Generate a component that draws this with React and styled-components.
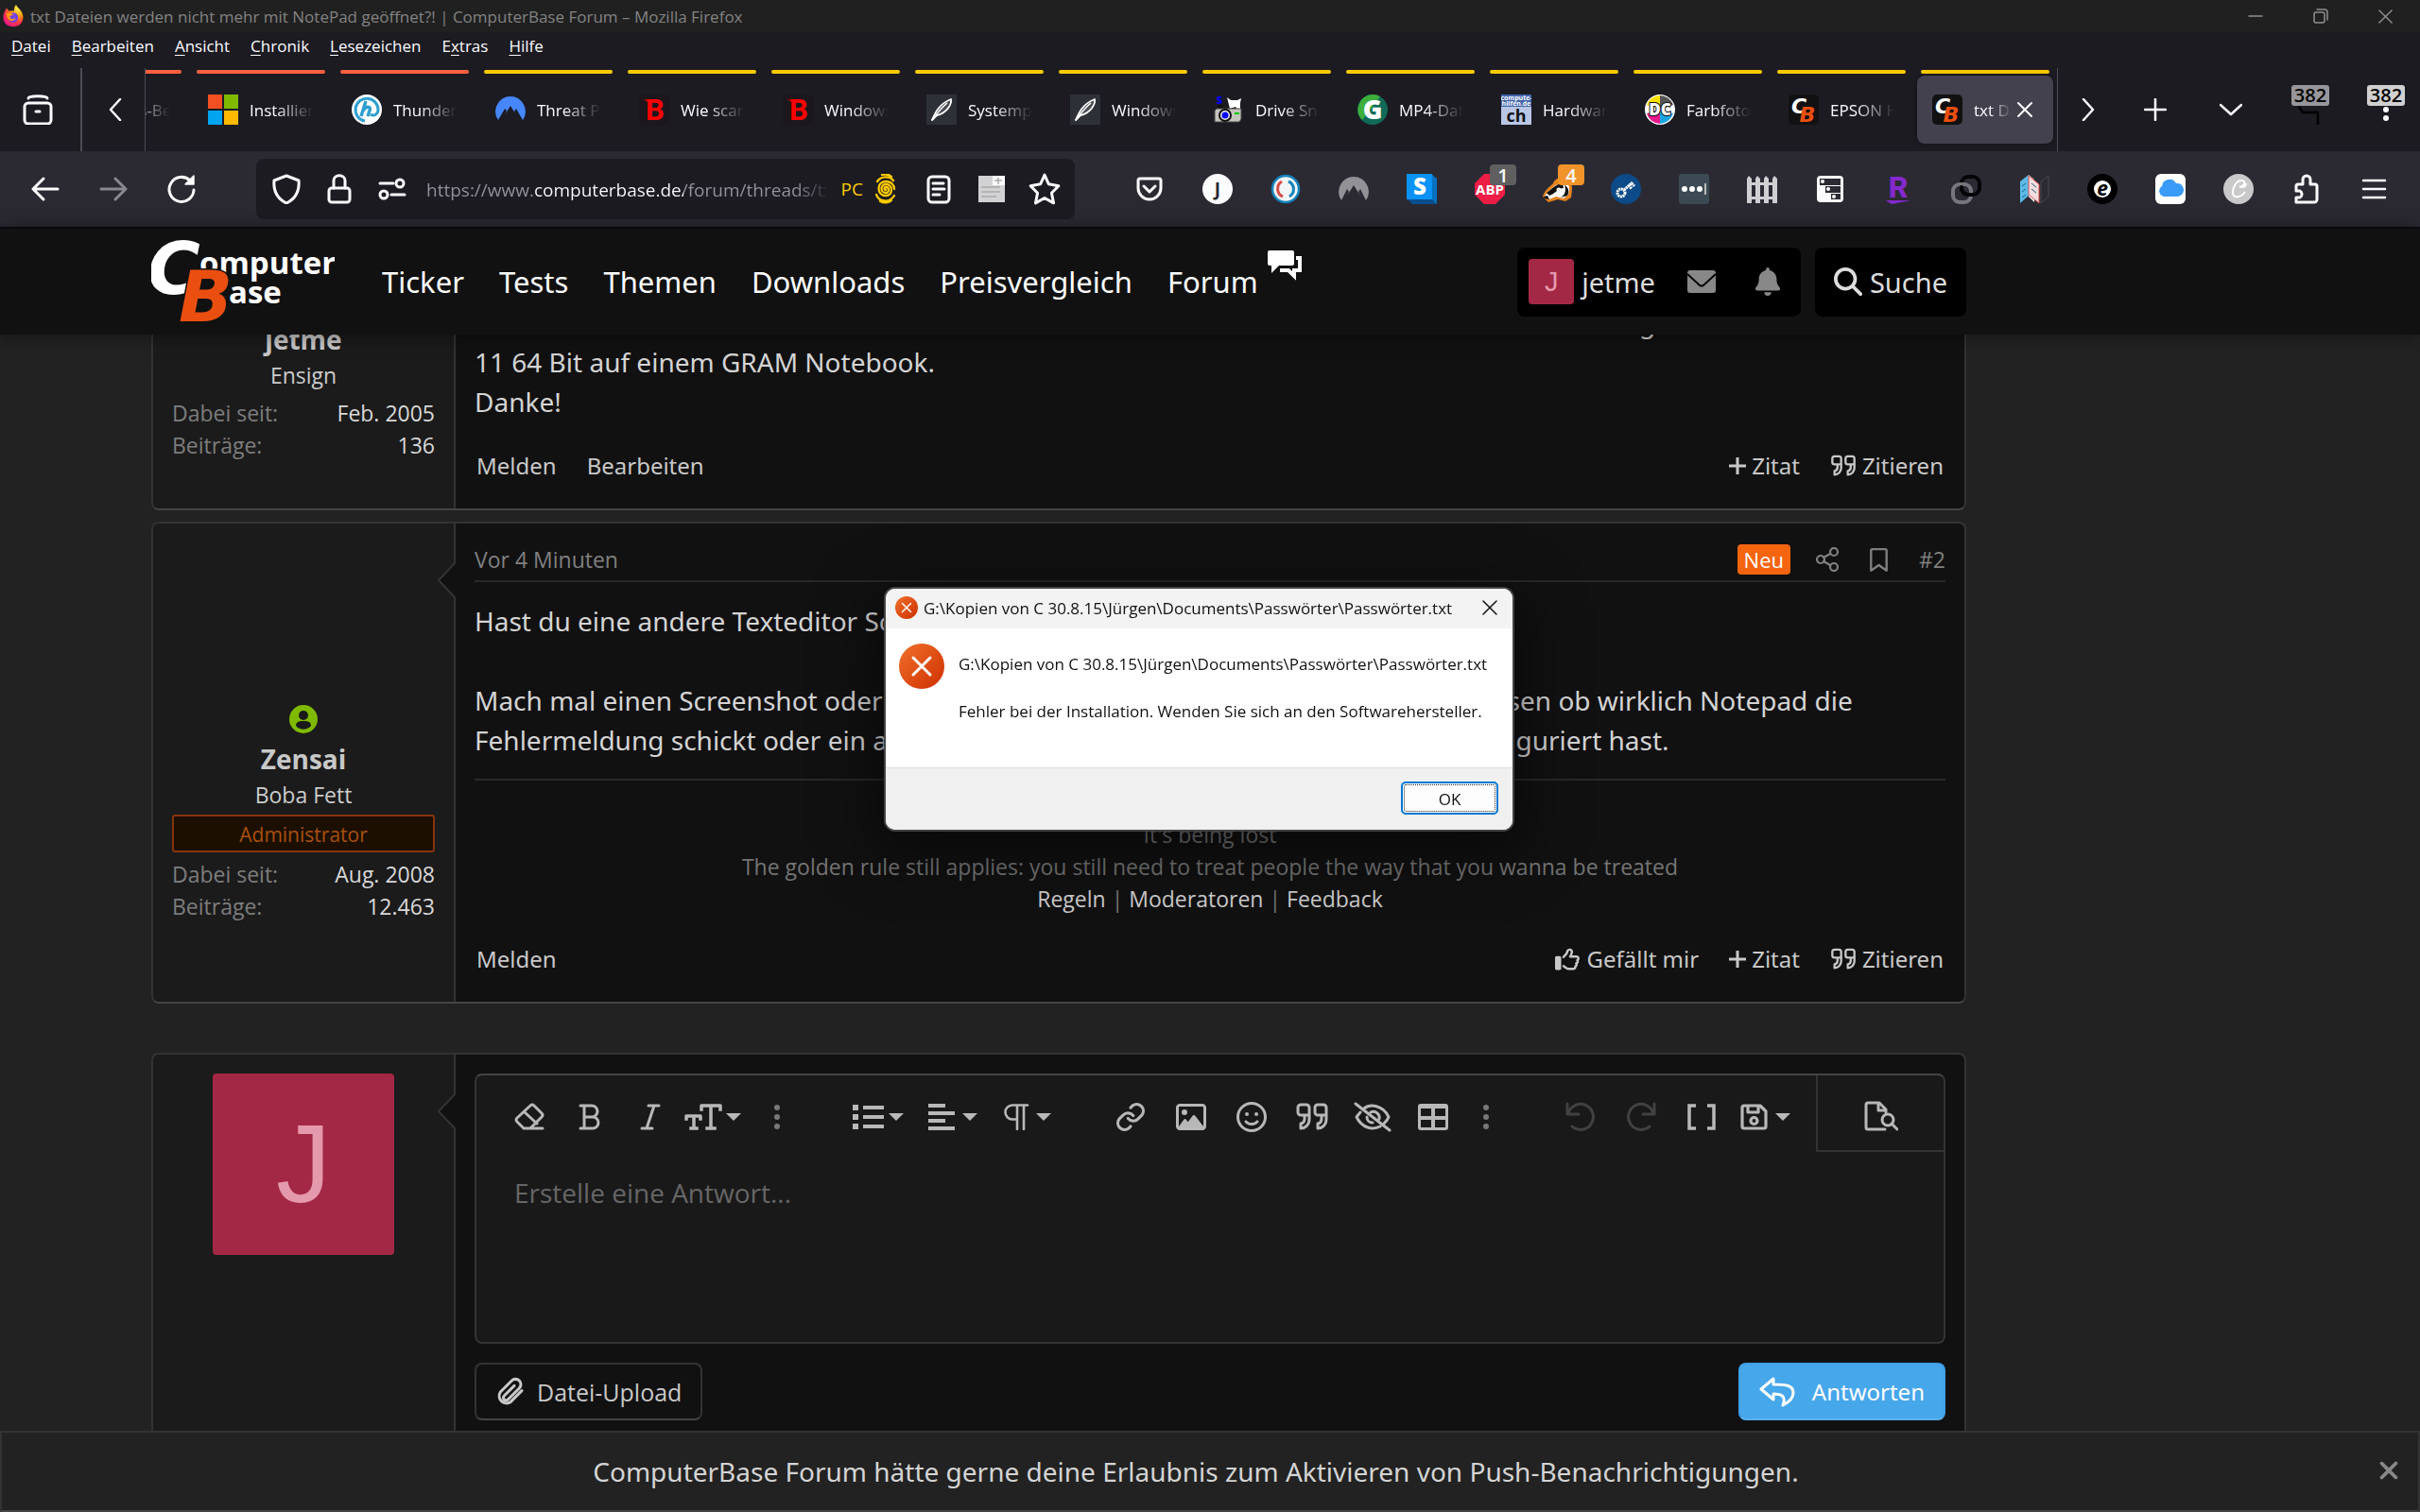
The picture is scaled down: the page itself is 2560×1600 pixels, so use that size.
import React from "react";
import styled, { createGlobalStyle, css } from "styled-components";
import {
  FaMagnifyingGlass, FaBell, FaRegImage, FaRegFaceSmile,
  FaRegThumbsUp, FaRegBookmark, FaXmark,
} from "react-icons/fa6";

const ui = '"Open Sans", "Noto Sans", sans-serif';
const reading = '"Noto Sans", "Open Sans", sans-serif';

const Global = createGlobalStyle`
  *, *::before, *::after { box-sizing: border-box; }
  html, body { margin: 0; height: 100%; background: #222; overflow: hidden; }
  body { font-family: ${ui}; color: #ccc; }
  button, input, textarea { font: inherit; color: inherit; background: none; border: 0; margin: 0; padding: 0; outline: 0; }
  a { color: inherit; text-decoration: none; }
  svg { display: block; flex: none; }
`;

const Screen = styled.div`
  display: flex;
  flex-direction: column;
  height: 100vh;
  overflow: hidden;
`;

/* ---------- browser window ---------- */

const TitleBar = styled.div`
  display: flex;
  align-items: center;
  height: 34px;
  padding-left: 2px;
  gap: 6px;
  background: #202020;
  color: #838383;
  font-size: 17px;
`;
const TitleText = styled.span`flex: 1; white-space: nowrap;`;
const WindowButtons = styled.div`display: flex; padding-right: 2px;`;
const WindowButton = styled.button`
  width: 69px;
  height: 34px;
  display: flex;
  align-items: center;
  justify-content: center;
  color: #8f8f8f;
`;

const MenuBar = styled.nav`
  display: flex;
  gap: 22px;
  height: 38px;
  padding-left: 12px;
  background: #1c1b22;
  color: #fbfbfe;
  font-size: 17px;
`;
const MenuItem = styled.button`line-height: 30px; height: 30px;`;
const Mnemonic = styled.span`text-decoration: underline; text-underline-offset: 3px;`;

const TabStrip = styled.div`
  display: flex;
  height: 88px;
  background: #1c1b22;
  color: #fbfbfe;
`;
const StripButton = styled.button`
  position: relative;
  width: ${(p) => p.$w}px;
  display: flex;
  align-items: center;
  justify-content: center;
`;
const LibraryCell = styled.div`
  display: flex;
  width: 87px;
  margin-right: 3px;
  border-right: 2px solid #4c4b54;
`;
const TabList = styled.div`
  flex: 1;
  min-width: 0;
  display: flex;
  justify-content: flex-end;
  overflow: hidden;
  border: solid #4c4b54;
  border-width: 0 1px;
`;
const TabCell = styled.div`
  flex: none;
  width: 152px;
  padding: 2px 4px 8px;
`;
const GroupLine = styled.div`
  height: 4px;
  margin: 0 4px 2px;
  border-radius: 2px;
  background: ${(p) => p.$color};
`;
const TabBody = styled.div`
  display: flex;
  align-items: center;
  height: 72px;
  padding: 0 16px;
  border-radius: 8px;
  ${(p) => p.$active && css`background: #42414d; box-shadow: 0 0 4px rgba(0, 0, 0, 0.4);`}
`;
const TabTitle = styled.button`
  flex: 1;
  min-width: 0;
  display: flex;
  align-items: center;
  gap: 12px;
  font-size: 17px;
  white-space: nowrap;
`;
const TabLabel = styled.span`
  flex: 1;
  min-width: 0;
  overflow: hidden;
  text-align: left;
  mask-image: linear-gradient(to right, #000 40%, transparent);
`;
const TabClose = styled.button`width: 28px; display: flex; justify-content: center;`;
const TabTools = styled.div`display: flex;`;
const CountBadge = styled.span`
  position: absolute;
  left: 24px;
  top: 18px;
  width: 40px;
  height: 22px;
  border-radius: 3px;
  background: ${(p) => p.$bg};
  color: #000;
  font-size: 20px;
  font-weight: 600;
  line-height: 22px;
  text-align: center;
`;

const NavBar = styled.div`
  display: flex;
  align-items: center;
  height: 82px;
  padding: 0 12px;
  border-bottom: 2px solid #0d0c12;
  background: #2b2a33;
  color: #fbfbfe;
`;
const IconRow = styled.div`display: flex;`;
const NavButton = styled.button`
  position: relative;
  width: 72px;
  height: 64px;
  display: flex;
  align-items: center;
  justify-content: center;
  opacity: ${(p) => (p.$dim ? 0.45 : 1)};
`;
const ExtBadge = styled.span`
  position: absolute;
  right: 8px;
  top: 6px;
  width: 28px;
  height: 22px;
  border-radius: 4px;
  background: ${(p) => p.$bg};
  font-size: 20px;
  font-weight: 600;
  line-height: 24px;
  text-align: center;
`;
const UrlBox = styled.div`
  flex: 1;
  min-width: 0;
  display: flex;
  align-items: center;
  height: 64px;
  margin: 0 43px;
  padding: 0 4px;
  border-radius: 8px;
  background: #1c1b22;
`;
const UrlButton = styled.button`
  width: 56px;
  height: 56px;
  display: flex;
  align-items: center;
  justify-content: center;
`;
const UrlInput = styled.input`
  flex: 1;
  min-width: 0;
  height: 50px;
  margin: 2px 16px 0 8px;
  font-size: 19px;
  background: linear-gradient(to right, #94939c 0 114px, #fbfbfe 114px 272px, #94939c 272px 390px, transparent 428px);
  background-clip: text;
  -webkit-text-fill-color: transparent;
`;
const ContainerButton = styled.button`
  display: flex;
  align-items: center;
  gap: 12px;
  padding-right: 16px;
  color: #ffcb00;
  font-size: 19px;
`;

/* ---------- forum page ---------- */

const SiteHeader = styled.header`
  position: relative;
  z-index: 1;
  display: flex;
  align-items: center;
  height: 112px;
  padding: 0 480px 0 160px;
  background: #111;
  box-shadow: 0 0 20px rgba(0, 0, 0, 0.5);
  color: #fff;
  font-family: ${reading};
  font-size: 31px;
`;
const SiteNav = styled.nav`
  flex: 1;
  display: flex;
  gap: 37px;
  margin-left: 50px;
`;
const NavLink = styled.a`display: flex; gap: 10px;`;
const ForumIcon = styled.svg`margin-top: 2px;`;
const HeaderBox = styled.div`
  display: flex;
  align-items: center;
  height: 73px;
  margin-left: 15px;
  border-radius: 8px;
  background: #000;
  color: #ddd;
  font-size: 29px;
`;
const AccountLink = styled.a`
  display: flex;
  align-items: center;
  gap: 8px;
  padding: 0 14px 0 12px;
`;
const BoxButton = styled.button`
  width: 70px;
  display: flex;
  justify-content: center;
  color: #888;
`;
const SearchButton = styled.button`
  display: flex;
  align-items: center;
  gap: 8px;
  padding: 0 20px;
`;
const Avatar = styled.span`
  width: ${(p) => p.$size}px;
  height: ${(p) => p.$size}px;
  display: flex;
  align-items: center;
  justify-content: center;
  border-radius: 4px;
  background: #a32845;
  color: #e599ad;
  font-family: "Liberation Sans", sans-serif;
  font-size: ${(p) => p.$font}px;
  line-height: 1;
`;

const Page = styled.main`
  flex: 1;
  min-height: 0;
  overflow: hidden;
  padding: 0 480px 0 160px;
  background: #222;
`;
/* the thread is scrolled so that the first post runs under the header */
const Thread = styled.div`
  display: flex;
  flex-direction: column;
  gap: 12px;
  margin-top: -246px;
`;
const Post = styled.article`
  display: grid;
  grid-template-columns: 320px 1fr;
  min-height: 432px;
  border: 2px solid #333;
  border-bottom-color: #444;
  border-radius: 8px;
  background: #111;
`;
const ReplyForm = styled(Post).attrs({ as: "form" })`
  margin-top: 40px;
`;
const UserCell = styled.section`
  position: relative;
  display: flex;
  flex-direction: column;
  align-items: center;
  padding: 20px;
  border-right: 2px solid #333;
  border-radius: 6px 0 0 6px;
  background: #1b1b1b;
  font-size: 23px;
  line-height: 34px;
`;
const NotchMark = styled.svg`
  position: absolute;
  right: -2px;
  top: 40px;
`;
const AvatarSlot = styled.div`
  display: flex;
  align-items: flex-end;
  justify-content: center;
  height: 192px;
  margin-bottom: 18px;
`;
const OnlineMark = styled.svg`margin-bottom: -10px;`;
const UserName = styled.a`
  font-size: 28px;
  font-weight: 700;
  line-height: 38px;
  color: #c8c8c8;
`;
const UserRank = styled.span`margin-top: 2px;`;
const StaffBadge = styled.div`
  align-self: stretch;
  height: 40px;
  margin-top: 4px;
  border: 2px solid #86340b;
  border-radius: 3px;
  background: #1c0f00;
  color: #a8500f;
  font-size: 21px;
  line-height: 38px;
  text-align: center;
`;
const Facts = styled.dl`
  align-self: stretch;
  margin: 6px 0 0;
`;
const Fact = styled.div`
  display: flex;
  justify-content: space-between;
`;
const FactName = styled.dt`color: #7d7d7d;`;
const FactValue = styled.dd`margin: 0; color: #d8d8d8;`;

const PostBody = styled.div`
  min-width: 0;
  display: flex;
  flex-direction: column;
  padding: 20px 20px 28px;
`;
const PostHead = styled.header`
  display: flex;
  align-items: center;
  height: 42px;
  padding-bottom: 4px;
  border-bottom: 2px solid #282828;
  color: #808080;
  font-size: 23px;
`;
const PostTime = styled.a`flex: 1;`;
const NewFlag = styled.span`
  padding: 0 7px;
  border-radius: 4px;
  background: #f5640f;
  color: #fff;
  font-size: 22px;
  line-height: 32px;
`;
const HeadLink = styled.a`margin-left: ${(p) => p.$gap || 30}px;`;
const PostText = styled.div`
  margin-top: ${(p) => (p.$bottom ? "auto" : "20px")};
  color: #d4d4d4;
  font-family: ${reading};
  font-size: 28px;
  line-height: 42px;
  p { margin: 0 0 42px; }
  p:last-child { margin: 0; }
`;
const CutLine = styled.div`padding-left: 1232px;`;
const Signature = styled.footer`
  margin-top: 20px;
  padding-top: 40px;
  border-top: 2px solid #282828;
  color: #757575;
  font-size: 23px;
  line-height: 34px;
  text-align: center;
  a { color: #ccc; }
`;
const Actions = styled.div`
  display: flex;
  align-items: center;
  gap: 32px;
  margin-top: ${(p) => p.$gap || 28}px;
  padding: 0 2px;
  color: #c8c8c8;
  font-family: ${reading};
  font-size: 24px;
  line-height: 34px;
`;
const Action = styled.a`
  display: flex;
  align-items: center;
  gap: ${(p) => p.$gap || 6}px;
`;
const Push = styled.span`flex: 1;`;

/* ---------- reply editor ---------- */

const Editor = styled.div`
  border: 2px solid #333;
  border-top-color: #444;
  border-radius: 8px;
  background: #191919;
`;
const Toolbar = styled.div`
  display: flex;
  height: 81px;
  padding-left: 24px;
  color: #b8b8b8;
`;
const ToolGroup = styled.div`
  display: flex;
  padding: 6px ${(p) => p.$after}px 0 0;
`;
const Tool = styled.button`
  width: ${(p) => p.$w || 64}px;
  display: flex;
  align-items: center;
  justify-content: center;
  opacity: ${(p) => p.$opacity || 1};
`;
const DropTool = styled(Tool)`
  width: 80px;
  justify-content: flex-start;
  gap: 4px;
  padding-left: 4px;
`;
const PreviewTool = styled(Tool)`
  width: 135px;
  margin-left: auto;
  padding-top: 6px;
  border: solid #333;
  border-width: 0 0 2px 2px;
`;
const ReplyText = styled.textarea`
  display: block;
  width: 100%;
  height: 201px;
  padding: 22px 40px;
  resize: none;
  font-size: 28px;
  line-height: 42px;
  &::placeholder { color: #666; opacity: 1; }
`;
const FormRow = styled.div`
  display: flex;
  justify-content: space-between;
  margin-top: 20px;
`;
const FormButton = styled.button`
  display: flex;
  align-items: center;
  gap: ${(p) => (p.$primary ? 18 : 12)}px;
  height: 61px;
  padding: 0 20px;
  border: 2px solid ${(p) => (p.$primary ? "#3fa0e8" : "#333")};
  border-bottom-color: ${(p) => (p.$primary ? "#5ab0ef" : "#444")};
  border-radius: 8px;
  background: ${(p) => (p.$primary ? "#47a7eb" : "transparent")};
  color: ${(p) => (p.$primary ? "#fff" : "#c8c8c8")};
  font-family: ${(p) => (p.$primary ? reading : ui)};
  font-size: ${(p) => (p.$primary ? 24 : 25)}px;
`;

const PushNotice = styled.aside`
  position: relative;
  z-index: 1;
  display: flex;
  align-items: center;
  height: 86px;
  padding: 0 16px;
  border: 2px solid #333;
  border-bottom-color: #444;
  background: #222;
  font-family: ${reading};
  font-size: 28px;
`;
const NoticeText = styled.a`flex: 1; text-align: center; color: #d4d4d4;`;
const NoticeClose = styled.button`color: #888; height: 36px; align-self: flex-start; margin-top: 22px;`;

/* ---------- system message window ---------- */

const Dialog = styled.div`
  position: fixed;
  z-index: 3;
  left: 935px;
  top: 621px;
  width: 667px;
  border: 2px solid #444;
  border-radius: 12px;
  overflow: hidden;
  background: #fff;
  box-shadow: 0 16px 64px 8px rgba(0, 0, 0, 0.5);
  color: #111;
  font-size: 17px;
`;
const DialogBar = styled.div`
  display: flex;
  align-items: center;
  height: 42px;
  gap: 6px;
  padding: 0 15px 2px 10px;
  background: #f3f3f3;
`;
const DialogTitle = styled.span`flex: 1; white-space: nowrap;`;
const DialogBody = styled.div`
  display: flex;
  gap: 15px;
  height: 148px;
  padding: 16px 14px;
  border-bottom: 1px solid #dfdfdf;
  line-height: 25px;
  white-space: nowrap;
  p { margin: 9px 0 25px; }
`;
const DialogFoot = styled.div`
  display: flex;
  justify-content: flex-end;
  padding: 14px 15px 16px;
  background: #f0f0f0;
`;
const OkButton = styled.button`
  width: 103px;
  height: 35px;
  padding-top: 2px;
  border: 2px solid #0078d4;
  border-radius: 5px;
  background: #fdfdfd;
  outline: 1px dotted #222;
  outline-offset: -4px;
`;

/* ---------- drawings ---------- */

const Stroke = ({ w = 32, h = 32, box = "0 0 32 32", sw = 2.4, children, ...rest }) => (
  <svg width={w} height={h} viewBox={box} fill="none" stroke="currentColor" strokeWidth={sw} strokeLinecap="round" strokeLinejoin="round" aria-hidden="true" {...rest}>
    {children}
  </svg>
);
const Fill = ({ w = 32, h = 32, box = "0 0 32 32", children, ...rest }) => (
  <svg width={w} height={h} viewBox={box} fill="currentColor" aria-hidden="true" {...rest}>{children}</svg>
);
const Letter = ({ x = 16, y, size, fill, family = "Open Sans", weight = 700, style, children, anchor = "middle" }) => (
  <text x={x} y={y} fontSize={size} fill={fill} stroke="none" fontFamily={family} fontWeight={weight} fontStyle={style} textAnchor={anchor}>{children}</text>
);

const Cross = ({ s = 18, sw = 2 }) => <Stroke w={s} h={s} box="0 0 18 18" sw={sw}><path d="M2 2l14 14M16 2L2 16" /></Stroke>;

const Firefox = () => (
  <Fill w={24} h={24}>
    <defs>
      <radialGradient id="fx" cx="0.75" cy="0.15" r="0.95">
        <stop offset="0" stopColor="#fff44f" /><stop offset="0.4" stopColor="#ff980e" /><stop offset="0.7" stopColor="#ff3647" /><stop offset="1" stopColor="#e31587" />
      </radialGradient>
    </defs>
    <path fill="url(#fx)" d="M3 12C4 9 6 7 6 5c2 1 3 2 4 4 3-1 5-1 7 0 0-4 1-7 3-9 1 4 9 7 10 17 0 9-6 14-14 14S2 26 2 18c0-2 0-4 1-6z" />
    <circle cx="16" cy="18" r="7" fill="#7543e3" />
    <path fill="#ff980e" d="M6 12c4-2 8 0 11 2-3 0-4 2-6 3 1 4 6 4 9 1-2 7-13 7-14-6z" />
  </Fill>
);
const BIcon = () => (
  <Fill><rect width="32" height="32" fill="#1b171c" /><path d="M5 5h7v3H9z" fill="#b00" /><Letter x={17} y={27} size={31} fill="#f00" family="Roboto" weight={700}>B</Letter></Fill>
);
const Quill = () => (
  <Fill>
    <rect width="32" height="32" fill="#2d3037" />
    <path d="M6 27C9 20 13 10 26 5c1 7-6 15-15 17z" fill="#4a4c52" stroke="#fff" strokeWidth="1.800" strokeLinejoin="round" />
    <path d="M6 27C12 19 17 13 22 9" fill="none" stroke="#fff" strokeWidth="1.500" />
  </Fill>
);
const CbIcon = () => (
  <Fill><rect width="32" height="32" rx="5" fill="#111" /><Letter x={11} y={20} size={22} fill="#fff" family="DejaVu Sans" style="italic">C</Letter><Letter x={20} y={29} size={22} fill="#ea4f10" family="DejaVu Sans" style="italic">B</Letter></Fill>
);
const Favicons = {
  ms: <Fill><path fill="#f25022" d="M0 0h15v15H0z" /><path fill="#7fba00" d="M17 0h15v15H17z" /><path fill="#00a4ef" d="M0 17h15v15H0z" /><path fill="#ffb900" d="M17 17h15v15H17z" /></Fill>,
  th: <Fill><circle cx="16" cy="16" r="16" fill="#fff" /><path d="M14 28A12 12 0 1 1 28 17c-1 5-5 6-8 4" fill="none" stroke="#2f9fd0" strokeWidth="3" /><path d="M15 7l-5 16M12 17c3-5 9-5 7 0l-2 6" fill="none" stroke="#2f9fd0" strokeWidth="3.500" /></Fill>,
  nord: <Fill><path fill="#4687ff" d="M3 27A16 16 0 0 1 16 2a16 16 0 0 1 13 25l-7-12-2 3 1 2-5-8-5 8 1-3-2-2z" /></Fill>,
  b: <BIcon />,
  quill: <Quill />,
  drive: <Fill><Letter x={6} y={10} size={11} fill="#00f" weight={800}>S</Letter><path fill="#fff" d="M14 3l4 3h7l4-2-1 5v7h-3l-2-3-6 2z" /><path fill="#111" d="M5 11h5v4H5z" /><path fill="#c4c4bc" stroke="#444" d="M1 17l2-2h26v11l-2 3H1z" /><circle cx="12" cy="22" r="6" fill="#eee" stroke="#111" strokeWidth="2" /><circle cx="12" cy="22" r="3.500" fill="#00f" /><path fill="#0c0" d="M22 19h5v2h-5z" /></Fill>,
  g: <Fill><circle cx="16" cy="16" r="16" fill="#0f6b58" /><path d="M16 0a16 16 0 0 0-11 27L24 2a16 16 0 0 0-8-2z" fill="#3dae3a" /><Letter y={26} size={28} fill="#fff" weight={800}>G</Letter></Fill>,
  ch: <Fill><rect width="32" height="32" fill="#b9c7e6" /><rect width="32" height="13" fill="#3f66ad" /><Letter y={6} size={7} fill="#fff">compute-</Letter><Letter y={12} size={7} fill="#fff">hilfen.de</Letter><Letter y={29} size={18} fill="#111">ch</Letter></Fill>,
  dc: <Fill><circle cx="16" cy="16" r="16" fill="#fff" /><path fill="#ffe100" d="M16 16V1A15 15 0 0 0 2 11z" /><path fill="#555" d="M16 16V1a15 15 0 0 1 14 10z" /><path fill="#e6168b" d="M16 16v15A15 15 0 0 1 2 20z" /><path fill="#19a5e1" d="M16 16v15a15 15 0 0 0 14-11z" /><text x="16" y="22" fontSize="17" fontFamily="Open Sans" fontWeight="800" textAnchor="middle" fill="#fff" stroke="#111" strokeWidth="2" paintOrder="stroke">DC</text></Fill>,
  cb: <CbIcon />,
};

const QuoteIcon = ({ w = 28, h = 26 }) => (
  <Stroke w={w} h={h} box="0 0 36 32" sw={3}>
    <path d="M15 14H6a3 3 0 0 1-3-3V6a3 3 0 0 1 3-3h6a3 3 0 0 1 3 3v13a9 9 0 0 1-9 9v-5a5 5 0 0 0 4-5v-4" />
    <path d="M33 14h-9a3 3 0 0 1-3-3V6a3 3 0 0 1 3-3h6a3 3 0 0 1 3 3v13a9 9 0 0 1-9 9v-5a5 5 0 0 0 4-5v-4" />
  </Stroke>
);
const PlusIcon = () => <Fill w={18} h={18} box="0 0 18 18"><path d="M7.500 0h3v7.500H18v3h-7.500V18h-3v-7.500H0v-3h7.500z" /></Fill>;
const Dots = () => <Fill w={6} h={28} box="0 0 6 28"><circle cx="3" cy="4" r="3" /><circle cx="3" cy="14" r="3" /><circle cx="3" cy="24" r="3" /></Fill>;
const Caret = () => <Fill w={16} h={8} box="0 0 16 8"><path d="M0 0h16L8 8z" /></Fill>;
const Undo = ({ flip }) => (
  <Stroke sw={3}><g transform={flip ? "translate(32 0) scale(-1 1)" : undefined}><path d="M2 2v11h12M3 12A13.500 13.500 0 1 1 7 26" /></g></Stroke>
);
const ErrorMark = ({ s }) => (
  <Fill w={s} h={s} box="0 0 48 48">
    <defs><linearGradient id="err" x2="1" y2="1"><stop stopColor="#f0702c" /><stop offset="1" stopColor="#cf3000" /></linearGradient></defs>
    <circle cx="24" cy="24" r="24" fill="url(#err)" />
    <path d="M15 15l18 18M33 15L15 33" stroke="#fff" strokeWidth="3" strokeLinecap="round" />
  </Fill>
);
const Notch = () => (
  <NotchMark width="20" height="40" viewBox="0 0 20 40">
    <path d="M20 2L2 20l18 18z" fill="#111" />
    <path d="M19 2L2 20l17 18" fill="none" stroke="#333" strokeWidth="2" />
  </NotchMark>
);
const Logo = () => (
  <svg width="194" height="90" viewBox="0 0 194 90" role="img" aria-label="ComputerBase">
    <Letter x={-4} y={58} size={76} fill="#fff" family="DejaVu Sans" style="italic" anchor="start">C</Letter>
    <Letter x={51} y={37} size={33} fill="#fff" anchor="start">omputer</Letter>
    <Letter x={82} y={68} size={33} fill="#fff" anchor="start">ase</Letter>
    <text x="29" y="87" fontSize="75" fontFamily="DejaVu Sans" fontWeight="700" fontStyle="italic" fill="#ea4f10" stroke="#111" strokeWidth="3" paintOrder="stroke">B</text>
  </svg>
);

const extensions = [
  ["Pocket", <Stroke sw={3}><path d="M6 5h20a2 2 0 0 1 2 2v8a12 12 0 0 1-24 0V7a2 2 0 0 1 2-2z" /><path d="M10 13l6 6 6-6" /></Stroke>],
  ["Konto J", <Fill><circle cx="16" cy="16" r="16" fill="#fbfbfe" /><Letter y={23} size={19} fill="#2b2a33" family="Noto Sans">J</Letter></Fill>],
  ["Synchronisieren", <Fill><circle cx="16" cy="16" r="14" fill="#f2f6f9" stroke="#1583bb" strokeWidth="2.500" /><path d="M13 24a9 9 0 0 1-1-16" fill="none" stroke="#d64c45" strokeWidth="3" /><path d="M19 8a9 9 0 0 1 1 16" fill="none" stroke="#1583bb" strokeWidth="3" /></Fill>],
  ["NordVPN", <Fill><path fill="#929196" d="M3 28A16 16 0 0 1 16 3a16 16 0 0 1 13 25l-6-12-2 3 2 4-7-11-7 11 2-4-2-3z" /></Fill>],
  ["Startpage", <Fill><path fill="#0b4f8f" d="M0 26h27l5 6H6z" /><path fill="#0870c0" d="M26 0l6 5v27l-6-6z" /><path fill="#0a92f5" d="M0 0h27v27H0z" /><Letter x={14} y={22} size={24} fill="#fff" weight={800}>S</Letter></Fill>],
  ["Adblock Plus", <Fill><path fill="#ed1e45" d="M10 0h12l10 10v12L22 32H10L0 22V10z" /><Letter y={22} size={15} fill="#fff">ABP</Letter></Fill>, "1", "#5f5f5f"],
  ["Privacy Badger", <Fill><path fill="#e5821e" d="M0 24C2 17 7 14 11 10c1-4 5-6 8-5l10 2c3 6 2 12 1 18l-6 4-8-2-10 3z" /><path fill="#fff" d="M2 24c3-6 8-8 11-12l13-3c3 5 2 9 1 13l-5 4-8-2-7 3z" /><path fill="#111" d="M4 20c5-3 9-9 17-10l1 5c-5 0-9 6-15 8zM23 12c5 2 5 8 3 11l-7 2c5-3 6-8 4-13zM1 24l4-1 2 4-5-1z" /><circle cx="17" cy="17" r="2.500" fill="#fff" /></Fill>, "4", "#f0932b"],
  ["Schlüssel", <Fill><circle cx="16" cy="16" r="16" fill="#0c4b88" /><g fill="none" stroke="#fff" strokeWidth="3" strokeDasharray="2 0.600"><circle cx="11" cy="20" r="4" /><path d="M14 17l9-8M19 12l3 4M22 10l3 3" /></g></Fill>],
  ["Passwort", <Fill><rect width="32" height="32" rx="3" fill="#3c4a54" /><g fill="#fff"><circle cx="6" cy="16" r="3" /><circle cx="14" cy="16" r="3" /><circle cx="22" cy="16" r="3" /><path d="M27 10h2v12h-2z" fill="#bbb" /></g></Fill>],
  ["Zaun", <Fill><g fill="#cfcfd2"><path d="M0 5l2-3 3 3v26H0zM9 5l2-3 3 3v26H9zM18 5l2-3 3 3v26h-5zM27 5l2-3 3 3v26h-5zM0 9h32v3H0zM0 24h32v3H0z" /></g></Fill>],
  ["Schubladen", <Fill><rect x="2" y="2" width="28" height="28" rx="4" fill="#fbfbfe" /><path fill="#2b2a33" d="M5 5h22v7H5zM11 13h16v7H11zM17 21h10v6H17z" /><g fill="#fff"><circle cx="8" cy="8" r="2" /><circle cx="14" cy="16" r="2" /><circle cx="20" cy="24" r="2" /></g></Fill>],
  ["Rakuten", <Fill><Letter y={25} size={32} fill="#8529cd" family="Roboto" weight={800}>R</Letter><path fill="#8529cd" d="M3 28h26l-20 4z" /></Fill>],
  ["Verknüpfung", <Stroke sw={4}><rect x="11" y="3" width="19" height="19" rx="7" stroke="#050507" /><rect x="2" y="11" width="19" height="19" rx="7" stroke="#77767c" /><path stroke="#050507" d="M11 14c0 5 3 8 7 8h5" /></Stroke>],
  ["Karte", <Fill><path fill="#5cbbe8" d="M1 8L10 1v22L1 31z" /><path fill="#f7f7f7" d="M10 1l6 5v24l-6-6z" /><path fill="#f2dede" stroke="#e04a48" d="M10 2l11 9v20l-11-9z" /><path fill="none" stroke="#48474f" d="M23 8l8-6v22l-8 7z" /><path d="M3 13l4-3M3 19l4-3M3 25l4-3M13 10l5 4M13 16l5 4" stroke="#1a5f86" /></Fill>],
  ["Evernote", <Fill><circle cx="16" cy="16" r="16" fill="#000" /><circle cx="16" cy="16" r="9" fill="#fff" /><Letter y={23} size={21} fill="#000" style="italic">e</Letter></Fill>],
  ["iCloud", <Fill><rect width="32" height="32" rx="6" fill="#fff" /><path fill="#3b9cf8" d="M9 24a6 6 0 0 1-2-11 8 8 0 0 1 15-3 7 7 0 0 1 2 14z" /></Fill>],
  ["Lesezeichen C", <Fill><circle cx="16" cy="16" r="16" fill="#c9c9c9" /><path d="M19 13c4-1 5-6 0-6-7 0-13 16-6 17 4 1 8-2 10-5M17 13c2 2 7 1 7-3" fill="none" stroke="#fff" strokeWidth="2" /></Fill>],
  ["Erweiterungen", <Stroke sw={3}><path d="M5 30h19a3 3 0 0 0 3-3V13a2 2 0 0 0-2-2h-5V6a4 4 0 0 0-8 0v5H7a2 2 0 0 0-2 2v5h4a4 4 0 0 1 0 7H5z" /></Stroke>],
  ["Menü", <Stroke sw={2.5}><path d="M4 7h23M4 16h23M4 25h23" /></Stroke>],
];

const red = "#ff613d";
const yellow = "#ffcb00";
const tabs = [
  ["quill", "Fotos-Bee", red],
  ["ms", "Installieren", red],
  ["th", "Thunderbird", red],
  ["nord", "Threat Protection", yellow],
  ["b", "Wie scanne", yellow],
  ["b", "Windows", yellow],
  ["quill", "Systempartition", yellow],
  ["quill", "Windows", yellow],
  ["drive", "Drive Snapshot", yellow],
  ["g", "MP4-Datei", yellow],
  ["ch", "Hardware", yellow],
  ["dc", "Farbfoto", yellow],
  ["cb", "EPSON Handbuch", yellow],
  ["cb", "txt Dateien", yellow, true],
];
const menus = [["", "D", "atei"], ["", "B", "earbeiten"], ["", "A", "nsicht"], ["", "C", "hronik"], ["", "L", "esezeichen"], ["E", "x", "tras"], ["", "H", "ilfe"]];

const Browser = () => (
  <>
    <TitleBar>
      <Firefox />
      <TitleText>txt Dateien werden nicht mehr mit NotePad geöffnet?! | ComputerBase Forum – Mozilla Firefox</TitleText>
      <WindowButtons>
        <WindowButton aria-label="Minimieren"><Stroke w={16} h={16} box="0 0 16 16" sw={1.5}><path d="M1 8h14" /></Stroke></WindowButton>
        <WindowButton aria-label="Verkleinern"><Stroke w={16} h={16} box="0 0 16 16" sw={1.5}><rect x="1" y="4" width="11" height="11" rx="2" /><path d="M4 1h8a3 3 0 0 1 3 3v8" /></Stroke></WindowButton>
        <WindowButton aria-label="Schließen"><Cross s={17} sw={1.5} /></WindowButton>
      </WindowButtons>
    </TitleBar>
    <MenuBar>
      {menus.map(([a, b, c]) => <MenuItem key={c}>{a}<Mnemonic>{b}</Mnemonic>{c}</MenuItem>)}
    </MenuBar>
    <TabStrip>
      <LibraryCell>
        <StripButton $w={80} aria-label="Bibliothek">
          <Stroke sw={3}><path d="M6 4c0-3 20-3 20 0" /><rect x="2" y="9" width="28" height="22" rx="4" /><path d="M14 18h4" /></Stroke>
        </StripButton>
      </LibraryCell>
      <StripButton $w={63} aria-label="Tabs zurück"><Stroke w={14} h={24} box="0 0 14 24" sw={2.5}><path d="M12 1L2 12l10 11" /></Stroke></StripButton>
      <TabList role="tablist">
        {tabs.map(([icon, label, color, active], i) => (
          <TabCell key={i}>
            <GroupLine $color={color} />
            <TabBody $active={active}>
              <TabTitle role="tab" aria-selected={!!active}>{Favicons[icon]}<TabLabel>{label}</TabLabel></TabTitle>
              {active && <TabClose aria-label="Tab schließen"><Cross s={18} /></TabClose>}
            </TabBody>
          </TabCell>
        ))}
      </TabList>
      <TabTools>
        <StripButton $w={63} aria-label="Tabs vor"><Stroke w={14} h={24} box="0 0 14 24" sw={2.5}><path d="M2 1l10 11L2 23" /></Stroke></StripButton>
        <StripButton $w={80} aria-label="Neuer Tab"><Stroke w={24} h={24} box="0 0 24 24" sw={2.5}><path d="M12 1v22M1 12h22" /></Stroke></StripButton>
        <StripButton $w={80} aria-label="Alle Tabs"><Stroke w={24} h={14} box="0 0 24 14" sw={2.5}><path d="M1 2l11 10L23 2" /></Stroke></StripButton>
        <StripButton $w={80} aria-label="Tabzähler">
          <Stroke sw={2.5} stroke="#000"><path d="M8 13l4 6h16v13" /></Stroke><CountBadge $bg="#97969a">382</CountBadge>
        </StripButton>
        <StripButton $w={80} aria-label="Tabmenü">
          <Fill><circle cx="20" cy="16" r="3" /><circle cx="20" cy="25" r="3" /></Fill><CountBadge $bg="#d0d0d0">382</CountBadge>
        </StripButton>
      </TabTools>
    </TabStrip>
    <NavBar>
      <IconRow>
        <NavButton aria-label="Zurück"><Stroke sw={3}><path d="M29 16H3M14 5L3 16l11 11" /></Stroke></NavButton>
        <NavButton $dim aria-label="Vor"><Stroke sw={3}><path d="M3 16h26M18 5l11 11-11 11" /></Stroke></NavButton>
        <NavButton aria-label="Neu laden"><Stroke sw={3}><path d="M29 17A13 13 0 1 1 25 7" /><path d="M29 2v9h-9z" fill="currentColor" strokeWidth="1.500" /></Stroke></NavButton>
      </IconRow>
      <UrlBox>
        <UrlButton aria-label="Schutz"><Stroke sw={3}><path d="M16 2l13 5c1 11-3 19-13 24C6 26 2 18 3 7z" /></Stroke></UrlButton>
        <UrlButton aria-label="Verbindung"><Stroke sw={3}><rect x="5" y="15" width="22" height="15" rx="3" /><path d="M10 15V7c0-7 12-7 12 0v8" /></Stroke></UrlButton>
        <UrlButton aria-label="Berechtigungen"><Stroke sw={3}><path d="M3 10h14M15 22h14" /><circle cx="24" cy="10" r="4" /><circle cx="7" cy="22" r="4" /></Stroke></UrlButton>
        <UrlInput aria-label="Adresse" defaultValue="https://www.computerbase.de/forum/threads/txt" />
        <ContainerButton>
          PC
          <Stroke w={24} h={32} box="0 0 24 32" sw={2.3}>
            <path d="M12 17c-2 0-2-3 0-3 4 0 4 6 0 6-6 0-6-9 0-9 8 0 8 12 0 12-10 0-10-15 0-15 6 0 9 4 9 8" />
            <path d="M3 8c4-6 13-6 17-1M2 22c3 8 14 9 19 1M6 29c4 2 9 2 12-1M8 1c4-1 8 0 10 2" />
          </Stroke>
        </ContainerButton>
        <UrlButton aria-label="Leseansicht"><Stroke sw={3}><rect x="5" y="3" width="22" height="27" rx="4" /><path d="M10 10h11M10 16h12M10 22h7" /></Stroke></UrlButton>
        <UrlButton aria-label="Seite ablegen"><Fill><path fill="#d2d2d4" d="M2 2h28v28H2z" /><path fill="#fff" d="M17 2h13v10H17z" /><path d="M23 4v7M19 7h8M5 14h20M5 19h20M5 24h16" stroke="#aaa" strokeWidth="1.500" /></Fill></UrlButton>
        <UrlButton aria-label="Lesezeichen setzen"><Stroke w={34} h={34} sw={2.8}><path d="M16 2l4 9 10 2-7 7 2 10-9-5-9 5 2-10-7-7 10-2z" /></Stroke></UrlButton>
      </UrlBox>
      <IconRow>
        {extensions.map(([name, icon, badge, bg]) => (
          <NavButton key={name} aria-label={name}>{icon}{badge && <ExtBadge $bg={bg}>{badge}</ExtBadge>}</NavButton>
        ))}
      </IconRow>
    </NavBar>
  </>
);

const Header = () => (
  <SiteHeader>
    <a href="#start"><Logo /></a>
    <SiteNav>
      {["Ticker", "Tests", "Themen", "Downloads", "Preisvergleich"].map((t) => <NavLink key={t} href={"#" + t}>{t}</NavLink>)}
      <NavLink href="#forum">Forum
        <ForumIcon width="36" height="32" viewBox="0 0 36 32" fill="currentColor" transform="translate(0 -14)"><path d="M2 0h24a2 2 0 0 1 2 2v12a2 2 0 0 1-2 2H12l-8 8v-8H2a2 2 0 0 1-2-2V2a2 2 0 0 1 2-2z" /><path d="M30 8h4v13h-6v6l-6-6h-9" fill="none" stroke="currentColor" strokeWidth="4" /></ForumIcon>
      </NavLink>
    </SiteNav>
    <HeaderBox>
      <AccountLink href="#konto"><Avatar $size={48} $font={29}>J</Avatar>jetme</AccountLink>
      <BoxButton aria-label="Nachrichten"><Fill w={30} h={24} box="0 0 30 24"><path d="M3 0h24a3 3 0 0 1 3 3v18a3 3 0 0 1-3 3H3a3 3 0 0 1-3-3V3a3 3 0 0 1 3-3z" /><path d="M0 4l13 12q2 1 4 0L30 4" fill="none" stroke="#000" strokeWidth="2" /></Fill></BoxButton>
      <BoxButton aria-label="Hinweise"><FaBell size={30} /></BoxButton>
    </HeaderBox>
    <HeaderBox><SearchButton><FaMagnifyingGlass size={30} />Suche</SearchButton></HeaderBox>
  </SiteHeader>
);

const UserFacts = ({ since, posts }) => (
  <Facts>
    <Fact><FactName>Dabei seit:</FactName><FactValue>{since}</FactValue></Fact>
    <Fact><FactName>Beiträge:</FactName><FactValue>{posts}</FactValue></Fact>
  </Facts>
);
const QuoteActions = () => (
  <>
    <Action href="#zitat"><PlusIcon />Zitat</Action>
    <Action href="#zitieren"><QuoteIcon />Zitieren</Action>
  </>
);

const FirstPost = () => (
  <Post>
    <UserCell>
      <AvatarSlot><Avatar $size={192} $font={116}>J</Avatar></AvatarSlot>
      <UserName href="#jetme">jetme</UserName>
      <UserRank>Ensign</UserRank>
      <UserFacts since="Feb. 2005" posts="136" />
    </UserCell>
    <PostBody>
      <PostText $bottom>
        <CutLine>g</CutLine>
        11 64 Bit auf einem GRAM Notebook.<br />Danke!
      </PostText>
      <Actions $gap={30}>
        <Action href="#melden">Melden</Action>
        <Action href="#bearbeiten">Bearbeiten</Action>
        <Push />
        <QuoteActions />
      </Actions>
    </PostBody>
  </Post>
);

const SecondPost = () => (
  <Post>
    <UserCell>
      <Notch />
      <AvatarSlot>
        <OnlineMark width="30" height="30" viewBox="0 0 30 30"><circle cx="15" cy="15" r="15" fill="#7fb900" /><circle cx="15" cy="11" r="5" fill="#1a1a1a" /><path d="M7 22c0-4 3-5 8-5s8 1 8 5c-4 5-12 5-16 0z" fill="#1a1a1a" /></OnlineMark>
      </AvatarSlot>
      <UserName href="#zensai">Zensai</UserName>
      <UserRank>Boba Fett</UserRank>
      <StaffBadge>Administrator</StaffBadge>
      <UserFacts since="Aug. 2008" posts="12.463" />
    </UserCell>
    <PostBody>
      <PostHead>
        <PostTime href="#zeit">Vor 4 Minuten</PostTime>
        <NewFlag>Neu</NewFlag>
        <HeadLink href="#teilen" aria-label="Teilen" $gap={27}><Stroke w={24} h={26} box="0 0 24 26" sw={2.2}><circle cx="19" cy="5" r="4" /><circle cx="5" cy="13" r="4" /><circle cx="19" cy="21" r="4" /><path d="M8 11l7-4M8 15l7 4" /></Stroke></HeadLink>
        <HeadLink href="#merken" aria-label="Merken"><FaRegBookmark size={25} /></HeadLink>
        <HeadLink href="#2">#2</HeadLink>
      </PostHead>
      <PostText>
        <p>Hast du eine andere Texteditor Software installiert?</p>
        <p>Mach mal einen Screenshot oder schau dir die Meldung genau an, um auszuschliessen ob wirklich Notepad die<br />Fehlermeldung schickt oder ein anderes Programm, das du dafür als Standard konfiguriert hast.</p>
      </PostText>
      <Signature>
        It's being lost<br />
        The golden rule still applies: you still need to treat people the way that you wanna be treated<br />
        <a href="#regeln">Regeln</a> | <a href="#moderatoren">Moderatoren</a> | <a href="#feedback">Feedback</a>
      </Signature>
      <Actions $gap={30}>
        <Action href="#melden2">Melden</Action>
        <Push />
        <Action href="#like" $gap={8}><FaRegThumbsUp size={26} />Gefällt mir</Action>
        <QuoteActions />
      </Actions>
    </PostBody>
  </Post>
);

const Reply = () => (
  <ReplyForm onSubmit={(e) => e.preventDefault()}>
    <UserCell>
      <Notch />
      <Avatar $size={192} $font={116}>J</Avatar>
    </UserCell>
    <PostBody>
      <Editor>
        <Toolbar>
          <ToolGroup $after={54}>
            <Tool type="button" aria-label="Formatierung entfernen"><Stroke sw={3}><path d="M10 28L3 21q-2-2 0-4L17 4q2-2 4 0l8 8q2 2 0 4L17 28M10 28h20M11 11l13 12" /></Stroke></Tool>
            <Tool type="button" aria-label="Fett"><Stroke w={24} h={28} box="0 0 24 28" sw={3}><path d="M2 2h12a6 6 0 0 1 0 12H6M6 2v24M2 26h13a6 6 0 0 0 0-12" /></Stroke></Tool>
            <Tool type="button" aria-label="Kursiv"><Stroke w={24} h={28} box="0 0 24 28" sw={3}><path d="M10 2h11M3 26h11M16 2L8 26" /></Stroke></Tool>
            <DropTool type="button" aria-label="Schriftgröße"><Stroke w={40} h={28} box="0 0 40 28" sw={3.5} strokeLinecap="square"><path d="M18 6V2h20v4M28 2v24M24 26h8M2 16v-3h15v3M10 13v13M7 26h6" /></Stroke><Caret /></DropTool>
            <Tool type="button" $w={44} $opacity={0.6} aria-label="Mehr Text"><Dots /></Tool>
          </ToolGroup>
          <ToolGroup $after={26}>
            <DropTool type="button" aria-label="Liste"><Fill w={34} h={28} box="0 0 34 28"><path d="M0 1h6v6H0zM0 11h6v6H0zM0 21h6v6H0zM11 2h22v4H11zM11 12h22v4H11zM11 22h22v4H11z" /></Fill><Caret /></DropTool>
            <DropTool type="button" aria-label="Ausrichtung"><Fill w={32} h={28} box="0 0 32 28"><path d="M0 0h18v4H0zM0 8h28v4H0zM0 16h18v4H0zM0 24h28v4H0z" /></Fill><Caret /></DropTool>
            <DropTool type="button" aria-label="Absatzformat"><Stroke w={30} h={28} box="0 0 30 28" sw={2.6}><path d="M25 1.500H9a7 7 0 0 0 0 15h5M14 2v25M21 2v25" /></Stroke><Caret /></DropTool>
          </ToolGroup>
          <ToolGroup $after={44}>
            <Tool type="button" aria-label="Link"><Stroke w={34} h={34} box="0 0 24 24" sw={2.2}><path d="M10 13a5 5 0 0 0 7.500.5l3-3a5 5 0 0 0-7-7L12 5M14 11a5 5 0 0 0-7.500-.5l-3 3a5 5 0 0 0 7 7L12 19" /></Stroke></Tool>
            <Tool type="button" aria-label="Bild"><FaRegImage size={32} /></Tool>
            <Tool type="button" aria-label="Smiley"><FaRegFaceSmile size={32} /></Tool>
            <Tool type="button" aria-label="Zitat"><QuoteIcon w={38} h={32} /></Tool>
            <Tool type="button" aria-label="Spoiler"><Stroke w={40} h={32} box="0 0 40 32" sw={3}><path d="M2 2l36 28M11 7C17 2 31 3 37 16c-1 3-3 5-5 7M7 11l-4 5c6 12 17 14 25 10M18 11c4-2 10 1 9 7M14 16c0 4 3 6 6 6" /></Stroke></Tool>
            <Tool type="button" aria-label="Tabelle"><Fill w={32} h={28} box="0 0 32 28"><path fillRule="evenodd" d="M3 0h26a3 3 0 0 1 3 3v22a3 3 0 0 1-3 3H3a3 3 0 0 1-3-3V3a3 3 0 0 1 3-3zM3 5v8h11V5zM18 5v8h11V5zM3 17v8h11v-8zM18 17v8h11v-8z" /></Fill></Tool>
            <Tool type="button" $w={48} $opacity={0.6} aria-label="Mehr Elemente"><Dots /></Tool>
          </ToolGroup>
          <ToolGroup $after={0}>
            <Tool type="button" $opacity={0.25} aria-label="Rückgängig"><Undo /></Tool>
            <Tool type="button" $opacity={0.25} aria-label="Wiederholen"><Undo flip /></Tool>
            <Tool type="button" aria-label="BBCode"><Stroke w={32} h={28} box="0 0 32 28" sw={3.5} strokeLinecap="butt" strokeLinejoin="miter"><path d="M10 2H3v24h7M22 2h7v24h-7" /></Stroke></Tool>
            <DropTool type="button" aria-label="Entwurf"><Stroke w={38} h={28} box="-5 0 38 28" sw={3.2}><path d="M4 2h17l6 6v16a2 2 0 0 1-2 2H4a2 2 0 0 1-2-2V4a2 2 0 0 1 2-2zM8 2v7h11V2" /><circle cx="14.500" cy="18" r="3.500" /></Stroke><Caret /></DropTool>
          </ToolGroup>
          <PreviewTool type="button" aria-label="Vorschau"><Stroke w={36} h={32} box="0 0 36 32" sw={3}><path d="M22 30H4a2 2 0 0 1-2-2V4a2 2 0 0 1 2-2h12l7 7v3M15 2v8h8" /><circle cx="25" cy="20" r="6" /><path d="M29 24l6 6" /></Stroke></PreviewTool>
        </Toolbar>
        <ReplyText aria-label="Antwort" placeholder="Erstelle eine Antwort..." />
      </Editor>
      <FormRow>
        <FormButton type="button">
          <Stroke w={32} h={32} box="0 0 24 24" sw={2.3}><path d="M21 11l-9 9a5.800 5.800 0 0 1-8-8l9-9a4 4 0 0 1 6 6l-9 9a2 2 0 0 1-3-3l8-8" /></Stroke>
          Datei-Upload
        </FormButton>
        <FormButton $primary>
          <Stroke w={38} h={32} box="0 0 38 32" sw={3}><path d="M15 2L2 13l13 11v-6c8 0 14 2 10 12 6-3 11-8 11-13 0-8-7-9-21-9z" /></Stroke>
          Antworten
        </FormButton>
      </FormRow>
    </PostBody>
  </ReplyForm>
);

export default function App() {
  return (
    <Screen>
      <Global />
      <Browser />
      <Header />
      <Page>
        <Thread>
          <FirstPost />
          <SecondPost />
          <Reply />
        </Thread>
      </Page>
      <PushNotice>
        <NoticeText href="#push">ComputerBase Forum hätte gerne deine Erlaubnis zum Aktivieren von Push-Benachrichtigungen.</NoticeText>
        <NoticeClose aria-label="Hinweis schließen"><FaXmark size={30} /></NoticeClose>
      </PushNotice>
      <Dialog role="alertdialog" aria-labelledby="dialog-title">
        <DialogBar>
          <ErrorMark s={24} />
          <DialogTitle id="dialog-title">G:\Kopien von C 30.8.15\Jürgen\Documents\Passwörter\Passwörter.txt</DialogTitle>
          <button aria-label="Schließen"><Cross s={18} sw={1.5} /></button>
        </DialogBar>
        <DialogBody>
          <ErrorMark s={48} />
          <div>
            <p>G:\Kopien von C 30.8.15\Jürgen\Documents\Passwörter\Passwörter.txt</p>
            <p>Fehler bei der Installation. Wenden Sie sich an den Softwarehersteller.</p>
          </div>
        </DialogBody>
        <DialogFoot><OkButton autoFocus>OK</OkButton></DialogFoot>
      </Dialog>
    </Screen>
  );
}
